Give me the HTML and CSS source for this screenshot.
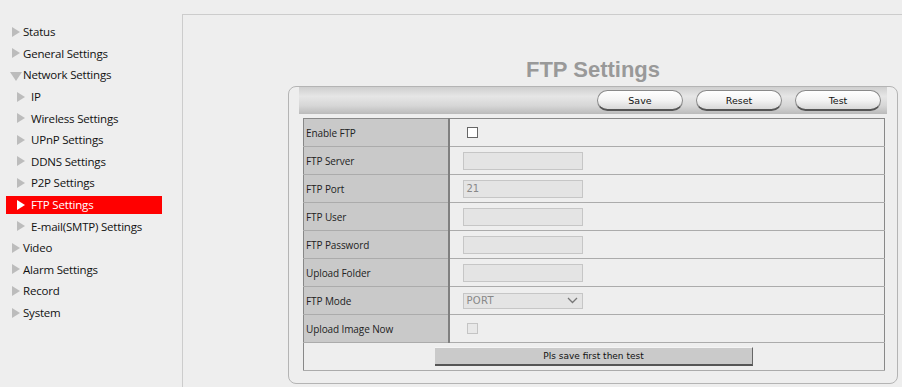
FILE: index.html
```html
<!DOCTYPE html>
<html lang="en">
<head>
  <meta charset="UTF-8" />
  <title>FTP Settings</title>
  <link rel="stylesheet" href="styles.css">
</head>
<body>
  <div class="page">
    <ul class="nav">
      <li class="top"><a><i class="tri"></i>Status</a></li>
      <li class="top"><a><i class="tri"></i>General Settings</a></li>
      <li class="top"><a><i class="tri down"></i>Network Settings</a></li>
      <li class="sub"><a><i class="tri"></i>IP</a></li>
      <li class="sub"><a><i class="tri"></i>Wireless Settings</a></li>
      <li class="sub"><a><i class="tri"></i>UPnP Settings</a></li>
      <li class="sub"><a><i class="tri"></i>DDNS Settings</a></li>
      <li class="sub"><a><i class="tri"></i>P2P Settings</a></li>
      <li class="sub active"><a><i class="tri"></i>FTP Settings</a></li>
      <li class="sub"><a><i class="tri"></i>E-mail(SMTP) Settings</a></li>
      <li class="top"><a><i class="tri"></i>Video</a></li>
      <li class="top"><a><i class="tri"></i>Alarm Settings</a></li>
      <li class="top"><a><i class="tri"></i>Record</a></li>
      <li class="top"><a><i class="tri"></i>System</a></li>
    </ul>

    <div class="frame">
      <div class="panel-wrap">
        <h1 class="title">FTP Settings</h1>
        <div class="panel">
          <div class="toolbar">
            <button class="pill">Save</button>
            <button class="pill">Reset</button>
            <button class="pill">Test</button>
          </div>
          <table class="form">
            <tr><td class="lbl">Enable FTP</td><td class="val"><span class="check"></span></td></tr>
            <tr><td class="lbl">FTP Server</td><td class="val"><span class="field"></span></td></tr>
            <tr><td class="lbl">FTP Port</td><td class="val"><span class="field">21</span></td></tr>
            <tr><td class="lbl">FTP User</td><td class="val"><span class="field"></span></td></tr>
            <tr><td class="lbl">FTP Password</td><td class="val"><span class="field"></span></td></tr>
            <tr><td class="lbl">Upload Folder</td><td class="val"><span class="field"></span></td></tr>
            <tr><td class="lbl">FTP Mode</td><td class="val">
              <span class="field select">PORT
                <svg class="chev" width="11" height="7" viewBox="0 0 11 7"><path d="M1 1 L5.5 5.5 L10 1" fill="none" stroke="#777" stroke-width="1.3"/></svg>
              </span>
            </td></tr>
            <tr><td class="lbl">Upload Image Now</td><td class="val"><span class="check off"></span></td></tr>
            <tr><td colspan="2" class="foot"><button class="wide">Pls save first then test</button></td></tr>
          </table>
        </div>
      </div>
    </div>
  </div>
</body>
</html>
```

FILE: styles.css
```css
* { box-sizing: border-box; }
body {
  margin: 0;
  background: #eeeeee;
  font-family: 'Open Sans', 'DejaVu Sans', sans-serif;
  color: #111;
  overflow: hidden;
}
.page { display: flex; height: 387px; }

/* side tree */
.nav {
  list-style: none;
  margin: 0;
  padding: 21px 0 0 0;
  width: 182px;
  flex: none;
  font-size: 11.5px;
  letter-spacing: -0.2px;
}
.nav li { height: 21.6px; display: flex; align-items: center; }
.nav a { display: flex; align-items: center; height: 18px; }
.nav .top a { padding-left: 12px; }
.nav .sub a { margin-left: 6px; padding-left: 11px; width: 156px; }
.tri {
  display: inline-block;
  width: 0; height: 0;
  border-top: 5px solid transparent;
  border-bottom: 5px solid transparent;
  border-left: 8px solid #bcbcbc;
  margin-right: 3px;
}
.sub .tri { margin-right: 6px; }
.tri.down {
  border-left: 6px solid transparent;
  border-right: 6px solid transparent;
  border-top: 9px solid #bcbcbc;
  border-bottom: none;
  margin-left: -2px;
  margin-right: 1px;
  margin-top: 3px;
}
.nav .active a { background: #ff0000; color: #fff; }
.nav .active .tri { border-left-color: #fff; }

/* content frame */
.frame {
  flex: 1;
  margin-top: 14px;
  border-top: 1px solid #cccccc;
  border-left: 1px solid #cccccc;
}
.panel-wrap { width: 610px; margin-left: 105px; padding-top: 42px; }
.title {
  margin: 0 0 3px 0;
  text-align: center;
  font-family: 'Liberation Sans', Arial, sans-serif;
  font-size: 22px;
  line-height: 26px;
  color: #999999;
  font-weight: bold;
}
.panel {
  border: 1px solid #b4b4b4;
  border-radius: 8px;
  padding: 0 10px 12px 10px;
  height: 298px;
}
.toolbar {
  height: 27px;
  background: linear-gradient(#cfcfcf, #e6e6e6 35%, #d6d6d6 70%, #bababa);
  display: flex;
  justify-content: flex-end;
  align-items: center;
  gap: 13px;
  padding-right: 6px;
}
.pill {
  width: 86px;
  height: 21px;
  border: 1px solid #8a8a8a;
  border-bottom: 2px solid #555;
  border-radius: 11px;
  background: linear-gradient(#ffffff, #f4f4f4 50%, #d8d8d8);
  font-family: 'DejaVu Sans', sans-serif;
  font-size: 9.5px;
  color: #111;
  padding: 0;
}

/* form table */
.form {
  margin: 4px 1px 0 4px;
  width: 582px;
  border-collapse: collapse;
  border: 1px solid #888;
  font-size: 10px;
  letter-spacing: -0.1px;
}
.form td { height: 28px; border-bottom: 1px solid #ababab; padding: 0; }
.lbl {
  width: 145px;
  background: #c9c9c9;
  border-right: 2px solid #808080;
  padding-left: 2px !important;
  color: #222;
}
.val { padding-left: 13px !important; }
.field {
  display: flex;
  align-items: center;
  width: 120px;
  height: 18px;
  background: #e4e4e4;
  border: 1px solid #c6c6c6;
  padding-left: 3px;
  font-family: 'DejaVu Sans', sans-serif;
  font-size: 10px;
  color: #888;
}
.select { justify-content: space-between; padding-right: 4px; height: 16px; letter-spacing: 0.3px; }
.check {
  display: block;
  width: 11px;
  height: 11px;
  margin-left: 4px;
  background: #fff;
  border: 1px solid #666;
}
.check.off { background: #e8e8e8; border-color: #c4c4c4; }
.foot { text-align: center; }
.wide {
  width: 318px;
  height: 19px;
  background: #cacaca;
  border: none;
  border-top: 1px solid #f4f4f4;
  border-right: 1px solid #666;
  border-bottom: 2px solid #555;
  font-family: 'DejaVu Sans', sans-serif;
  font-size: 9px;
  color: #111;
  padding: 0;
}
```
